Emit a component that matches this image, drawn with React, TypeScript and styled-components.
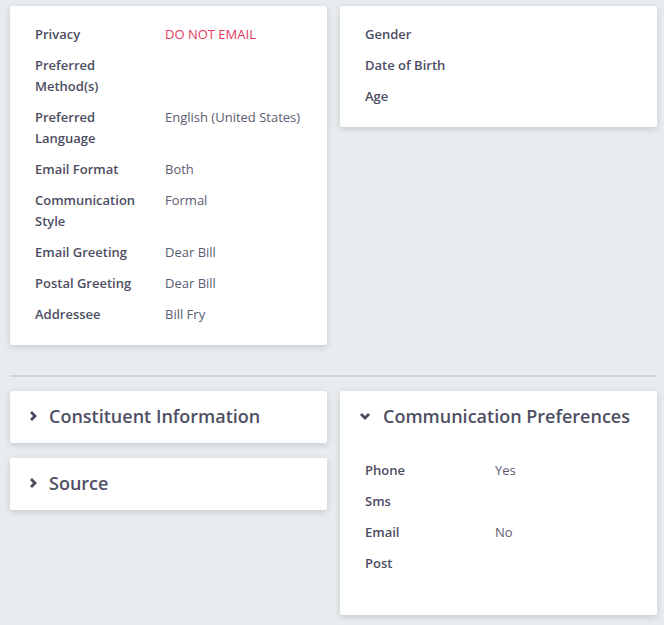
import React from "react";
import styled, { createGlobalStyle } from "styled-components";

const GlobalStyle = createGlobalStyle`
  body {
    margin: 0;
    background: #e8ecee;
    font-family: "Open Sans", "Liberation Sans", sans-serif;
  }
`;

const Page = styled.div`
  padding: 6px 7px 10px 10px;
`;

const TopGrid = styled.div`
  display: grid;
  grid-template-columns: 317px 317px;
  column-gap: 13px;
  align-items: start;
`;

const Card = styled.div`
  background: #fff;
  border-radius: 2px;
  box-shadow: 0 2px 6px rgba(40, 50, 60, 0.18);
`;

const FieldList = styled.div`
  padding: 18px 25px 10px;
`;

const Row = styled.div`
  display: grid;
  grid-template-columns: 120px 1fr;
  column-gap: 10px;
  margin-bottom: 10px;
  font-size: 13px;
  line-height: 21px;
`;

const Label = styled.div`
  font-weight: 600;
  color: #4d4d62;
`;

const Value = styled.div<{ $alert?: boolean }>`
  color: ${(p) => (p.$alert ? "#e2395d" : "#5c5c72")};
`;

const Divider = styled.hr`
  border: none;
  border-top: 2px solid #cfd3d5;
  margin: 30px 0 14px;
`;

const BottomGrid = styled.div`
  display: grid;
  grid-template-columns: 317px 317px;
  column-gap: 13px;
  align-items: start;
`;

const Stack = styled.div`
  display: flex;
  flex-direction: column;
  gap: 15px;
`;

const Header = styled.div`
  display: flex;
  align-items: center;
  height: 52px;
  box-sizing: border-box;
  padding: 0 0 2px 20px;
  color: #4f4f64;
`;

const IconBox = styled.span<{ $open?: boolean }>`
  display: flex;
  width: ${(p) => (p.$open ? "23px" : "19px")};
  flex-shrink: 0;
`;

const Title = styled.h3`
  margin: 0;
  font-size: 18px;
  font-weight: 600;
  line-height: 24px;
`;

const PrefList = styled(FieldList)`
  padding: 17px 25px 31px;
`;

type Field = { label: string; value?: string; alert?: boolean };

const contactFields: Field[] = [
  { label: "Privacy", value: "DO NOT EMAIL", alert: true },
  { label: "Preferred Method(s)" },
  { label: "Preferred Language", value: "English (United States)" },
  { label: "Email Format", value: "Both" },
  { label: "Communication Style", value: "Formal" },
  { label: "Email Greeting", value: "Dear Bill" },
  { label: "Postal Greeting", value: "Dear Bill" },
  { label: "Addressee", value: "Bill Fry" },
];

const personFields: Field[] = [
  { label: "Gender" },
  { label: "Date of Birth" },
  { label: "Age" },
];

const prefFields: Field[] = [
  { label: "Phone", value: "Yes" },
  { label: "Sms" },
  { label: "Email", value: "No" },
  { label: "Post" },
];

// solid chevron, like the icon font one in the app
function Chevron({ open }: { open?: boolean }) {
  return open ? (
    <svg width="10" height="7" viewBox="0 0 10 7">
      <path d="M0 2 L2 0 L5 3 L8 0 L10 2 L5 7 Z" fill="#4b4b5f" />
    </svg>
  ) : (
    <svg width="7" height="10" viewBox="0 0 7 10">
      <path d="M2 0 L0 2 L3 5 L0 8 L2 10 L7 5 Z" fill="#4b4b5f" />
    </svg>
  );
}

function Fields({ items }: { items: Field[] }) {
  return (
    <>
      {items.map((f) => (
        <Row key={f.label}>
          <Label>{f.label}</Label>
          <Value $alert={f.alert}>{f.value}</Value>
        </Row>
      ))}
    </>
  );
}

function Section({ title, open }: { title: string; open?: boolean }) {
  return (
    <Header>
      <IconBox $open={open}>
        <Chevron open={open} />
      </IconBox>
      <Title>{title}</Title>
    </Header>
  );
}

export default function App() {
  return (
    <Page>
      <GlobalStyle />
      <TopGrid>
        <Card>
          <FieldList>
            <Fields items={contactFields} />
          </FieldList>
        </Card>
        <Card>
          <FieldList>
            <Fields items={personFields} />
          </FieldList>
        </Card>
      </TopGrid>
      <Divider />
      <BottomGrid>
        <Stack>
          <Card>
            <Section title="Constituent Information" />
          </Card>
          <Card>
            <Section title="Source" />
          </Card>
        </Stack>
        <Card>
          <Section title="Communication Preferences" open />
          <PrefList>
            <Fields items={prefFields} />
          </PrefList>
        </Card>
      </BottomGrid>
    </Page>
  );
}
